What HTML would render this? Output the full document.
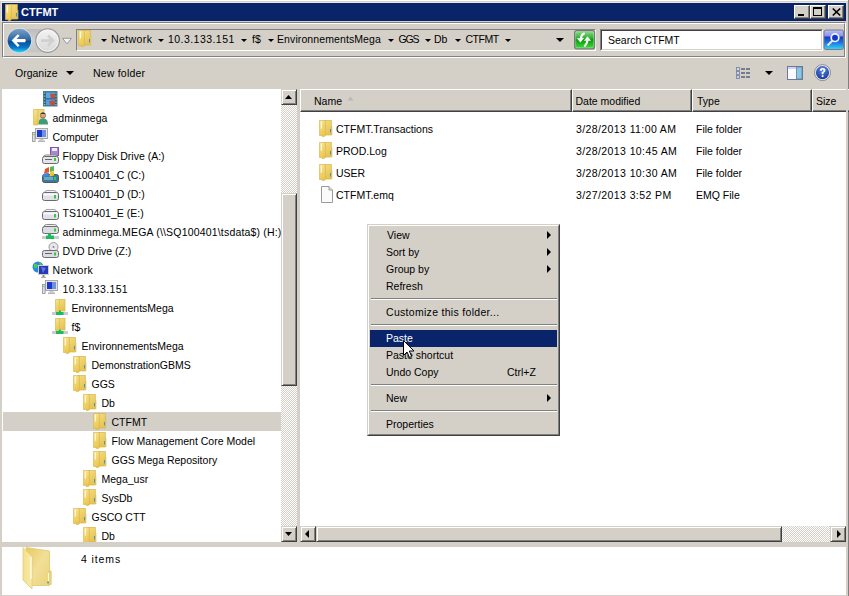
<!DOCTYPE html>
<html><head><meta charset="utf-8">
<style>
*{margin:0;padding:0;box-sizing:border-box}
html,body{width:849px;height:596px;overflow:hidden;background:#d4d0c8;font-family:"Liberation Sans",sans-serif;font-size:10.5px;color:#000}
.a{position:absolute;overflow:visible}
.t{position:absolute;white-space:pre;line-height:12px}
.btn3d{position:absolute;background:#d4d0c8;border-top:1px solid #d4d0c8;border-left:1px solid #d4d0c8;border-right:1px solid #404040;border-bottom:1px solid #404040;box-shadow:inset 1px 1px 0 #fff,inset -1px -1px 0 #808080}
.hdr{position:absolute;background:#d4d0c8;border-top:1px solid #fff;border-left:1px solid #fff;border-right:1px solid #404040;border-bottom:1px solid #404040;box-shadow:inset -1px -1px 0 #808080}
.cap{position:absolute;background:#d4d0c8;border-top:1px solid #fff;border-left:1px solid #fff;border-right:1px solid #404040;border-bottom:1px solid #404040;box-shadow:inset -1px -1px 0 #808080}
.track{position:absolute;background-color:#fff;background-image:repeating-conic-gradient(#d4d0c8 0 25%,#fff 0 50%);background-size:2px 2px}
.tri-d{position:absolute;width:0;height:0;border-left:3px solid transparent;border-right:3px solid transparent;border-top:3px solid #000}
</style></head><body>
<svg width="0" height="0" style="position:absolute">
<defs>
<linearGradient id="gFold" x1="0" x2="0.3" y1="0" y2="1"><stop offset="0" stop-color="#f8e494"/><stop offset="1" stop-color="#ecc850"/></linearGradient>
<linearGradient id="gBack" x1="0" x2="0.4" y1="0" y2="1"><stop offset="0" stop-color="#f4dc80"/><stop offset="1" stop-color="#e6c454"/></linearGradient>
<symbol id="i-folder" viewBox="0 0 17 17">
 <rect x="5.5" y="0.5" width="6.8" height="14.5" fill="url(#gBack)" stroke="#d8b44a" stroke-width="0.7"/>
 <rect x="12.2" y="6" width="1.1" height="9" fill="#e4c050"/>
 <path d="M0.4 0.4 H6.4 V15.4 H5.6 V16.4 H3.2 V15.4 H0.4 Z" fill="url(#gFold)" stroke="#d8b650" stroke-width="0.7"/>
 <rect x="1.8" y="1.5" width="1.2" height="7" fill="#fffae0"/>
 <rect x="11" y="9" width="1" height="3.5" fill="#3a98e0"/>
</symbol>
<symbol id="i-file" viewBox="0 0 17 17">
 <path d="M2.5 0.5 H10 L13.5 4 V16.5 H2.5 Z" fill="#fafafa" stroke="#9a9a9a" stroke-width="1"/>
 <path d="M10 0.5 V4 H13.5" fill="#e6e6e6" stroke="#9a9a9a" stroke-width="1"/>
</symbol>
<symbol id="i-video" viewBox="0 0 17 17">
 <rect x="0.5" y="1.5" width="13.5" height="14.5" fill="#2a5860" stroke="#4a8088"/>
 <rect x="2.8" y="2.3" width="9" height="6" fill="#58a8e8"/>
 <rect x="2.8" y="9.3" width="9" height="6" fill="#4aa0e8"/>
 <path d="M7 4 Q9 3 11.8 4.5 V8.3 H8 Z M6 11.5 Q9 10 11.8 11 V15.3 H7.5Z" fill="#c84a38"/>
 <g fill="#f0f0f0"><rect x="1.2" y="2.6" width="1" height="1"/><rect x="1.2" y="5.6" width="1" height="1"/><rect x="1.2" y="8.6" width="1" height="1"/><rect x="1.2" y="11.6" width="1" height="1"/><rect x="1.2" y="14.2" width="1" height="1"/><rect x="12.4" y="2.6" width="1" height="1"/><rect x="12.4" y="5.6" width="1" height="1"/><rect x="12.4" y="8.6" width="1" height="1"/><rect x="12.4" y="11.6" width="1" height="1"/><rect x="12.4" y="14.2" width="1" height="1"/></g>
</symbol>
<symbol id="i-user" viewBox="0 0 17 17">
 <rect x="3" y="0.5" width="8" height="14" fill="#eed77e" stroke="#d8bc58" stroke-width="0.8"/>
 <path d="M0.5 0.5 H5 V16 H0.5 Z" fill="url(#gFold)" stroke="#dcc062" stroke-width="0.8"/>
 <circle cx="10" cy="6.5" r="2.6" fill="#d9a77a" stroke="#5a4a3a" stroke-width="0.6"/>
 <path d="M5.5 15.5 C5.5 11 7 9.5 10 9.5 C13 9.5 15 11 15 15.5 Z" fill="#3f9a78"/>
 <path d="M7.5 5 C8 3 12 3 12.5 5 Z" fill="#3a3a3a"/>
</symbol>
<symbol id="i-computer" viewBox="0 0 17 17">
 <rect x="3.5" y="0.5" width="12" height="10" fill="#e4e4e4" stroke="#a8a8a8"/>
 <rect x="5" y="2" width="9" height="7" fill="#1a3ad0"/>
 <path d="M10 2 h4 v7 h-4z" fill="#7090e0"/>
 <rect x="7.5" y="11" width="4" height="1.5" fill="#c8c8c8"/>
 <rect x="6" y="12.5" width="7" height="1.5" fill="#b4b4b4"/>
 <rect x="0.5" y="4.5" width="2.6" height="9" fill="#e0e0e0" stroke="#909090" stroke-width="0.8"/>
 <rect x="1.3" y="6" width="1" height="1" fill="#3c3"/>
</symbol>
<symbol id="i-drive" viewBox="0 0 17 17">
 <path d="M2.5 8 Q2.5 5.5 5 5.5 H12 Q14.5 5.5 14.5 8" fill="#f4f4f8" stroke="#9a9aa0" stroke-width="0.9"/>
 <rect x="0.5" y="7.5" width="16" height="8" rx="2" fill="#e0e0e8" stroke="#6a6a70"/>
 <rect x="1.5" y="8.5" width="14" height="2" fill="#f8f8fc"/>
 <rect x="12" y="10" width="2" height="3.5" fill="#3c3"/>
</symbol>
<symbol id="i-floppy" viewBox="0 0 17 17">
 <rect x="8.5" y="0.5" width="8" height="8" fill="#a888d0" stroke="#7a5aa8"/>
 <rect x="10" y="1" width="5" height="3" fill="#f0eaf8"/>
 <path d="M1.5 10 Q1.5 8 4 8 H13 Q15.5 8 15.5 10" fill="#f0f0f0" stroke="#8a8a8a"/>
 <rect x="0.5" y="9.5" width="16" height="7" rx="2" fill="#e4e4ea" stroke="#6a6a70"/>
 <rect x="3" y="12" width="7" height="1" fill="#666"/>
 <rect x="12" y="11" width="2" height="3" fill="#3c3"/>
</symbol>
<symbol id="i-cdrive" viewBox="0 0 17 17">
 <rect x="0.5" y="8.5" width="16" height="8" rx="2" fill="#3a7aa0" stroke="#555"/>
 <rect x="2" y="11" width="9" height="3" fill="#6aa8c8"/>
 <rect x="12" y="11" width="2" height="3" fill="#3c3"/>
 <path d="M3 3 L7 1 L7 6 L2 8z" fill="#e8502a"/>
 <path d="M8 1 L12 0 L12 5 L8 6z" fill="#5cb84a"/>
 <path d="M1 8 L7 6.5 L6.5 10 L0.5 11z" fill="#3a8ae0"/>
 <path d="M8 6.5 L12 5.5 L12 9.5 L7.5 10.5z" fill="#f6c02a"/>
</symbol>
<symbol id="i-netdrive" viewBox="0 0 17 17">
 <path d="M2 4 Q2 1.5 4.5 1.5 H12.5 Q15 1.5 15 4" fill="#f0f0f4" stroke="#8a8a8a"/>
 <rect x="0.5" y="3.5" width="16" height="7" rx="2" fill="#dcdce4" stroke="#6a6a70"/>
 <rect x="12" y="5.5" width="2" height="3" fill="#3c3"/>
 <rect x="0" y="13" width="17" height="3" fill="#c8ccd4"/>
 <rect x="6" y="10.5" width="3" height="3" fill="#1cbc5c"/>
 <rect x="4" y="12.5" width="8" height="3.5" fill="#1cbc5c"/>
</symbol>
<symbol id="i-dvd" viewBox="0 0 17 17">
 <circle cx="11.5" cy="5" r="4.5" fill="#e8e8ec" stroke="#9a9aa0"/>
 <circle cx="11.5" cy="5" r="1" fill="#888"/>
 <rect x="0.5" y="8.5" width="16" height="7" rx="2" fill="#dcdce4" stroke="#6a6a70"/>
 <rect x="3" y="11" width="7" height="1" fill="#666"/>
 <rect x="12" y="10.5" width="2" height="3" fill="#3c3"/>
</symbol>
<symbol id="i-network" viewBox="0 0 17 17">
 <circle cx="6" cy="6" r="5.5" fill="#2a88e0"/>
 <path d="M2 3 Q5 2 6 5 Q4 8 2 7z M7 1 Q10 2 10 4 L8 4z" fill="#4ccc4c"/>
 <rect x="6.5" y="4.5" width="10" height="9" fill="#2838b0" stroke="#d0d0d0"/>
 <path d="M9 6 L14 7 L11 12z" fill="#5a7ae8"/>
 <rect x="10.5" y="14" width="2" height="2" fill="#888"/>
 <rect x="9" y="16" width="5" height="1" fill="#aaa"/>
</symbol>
<symbol id="i-share" viewBox="0 0 17 17">
 <rect x="6" y="0.5" width="7" height="11.5" fill="url(#gBack)" stroke="#d9bc55" stroke-width="0.8"/>
 <path d="M3.5 0.5 H7.5 V12.5 H3.5 Z" fill="url(#gFold)" stroke="#dcc062" stroke-width="0.8"/>
 <rect x="0" y="13" width="16" height="3" fill="#c8ccd4"/>
 <rect x="4" y="13" width="7.5" height="3" fill="#1cbc5c"/>
 <rect x="7" y="11.5" width="2" height="2" fill="#1cbc5c"/>
</symbol>
<linearGradient id="gBackBtn" x1="0" x2="0" y1="0" y2="1"><stop offset="0" stop-color="#7aa2c8"/><stop offset="0.49" stop-color="#2c64a0"/><stop offset="0.51" stop-color="#0a4c94"/><stop offset="0.8" stop-color="#0a78c8"/><stop offset="1" stop-color="#30d4f8"/></linearGradient>
<linearGradient id="gBand" x1="0" x2="0" y1="0" y2="1"><stop offset="0" stop-color="#bcbcbc"/><stop offset="0.5" stop-color="#d0d0d0"/><stop offset="1" stop-color="#c4c4c4"/></linearGradient>
<linearGradient id="gFwdBtn" x1="0" x2="0" y1="0" y2="1"><stop offset="0" stop-color="#f4f4f4"/><stop offset="1" stop-color="#d8d8d8"/></linearGradient>
<linearGradient id="gGreen" x1="0" x2="0" y1="0" y2="1"><stop offset="0" stop-color="#9adc9a"/><stop offset="0.42" stop-color="#2aae2a"/><stop offset="0.5" stop-color="#069a06"/><stop offset="1" stop-color="#48d848"/></linearGradient>
<linearGradient id="gBlue" x1="0" x2="0" y1="0" y2="1"><stop offset="0" stop-color="#b8c0f8"/><stop offset="0.3" stop-color="#8a94ec"/><stop offset="0.36" stop-color="#1838d0"/><stop offset="0.62" stop-color="#1870e0"/><stop offset="1" stop-color="#38d8f8"/></linearGradient>
<linearGradient id="gBigBack" x1="0" x2="1" y1="0" y2="1"><stop offset="0" stop-color="#e6c95e"/><stop offset="0.5" stop-color="#f2df98"/><stop offset="1" stop-color="#ebd277"/></linearGradient>
<linearGradient id="gBigFront" x1="0" x2="1" y1="0" y2="0"><stop offset="0" stop-color="#f4e08c"/><stop offset="1" stop-color="#f8eaaa"/></linearGradient>
<radialGradient id="gHelp" cx="0.5" cy="0.3" r="0.7"><stop offset="0" stop-color="#5a8ae8"/><stop offset="1" stop-color="#1a3a98"/></radialGradient>
</defs></svg>

<!-- window frame -->
<div class="a" style="left:0;top:0;width:848px;height:1px;background:#fff"></div>
<div class="a" style="left:1px;top:2px;width:846px;height:1px;background:#e9e7e2"></div>
<div class="a" style="left:1px;top:2px;width:1px;height:20px;background:#e9e7e2"></div>
<div class="a" style="left:848px;top:0;width:1px;height:596px;background:#808080"></div>

<!-- title bar -->
<div class="a" style="left:2px;top:3px;width:844px;height:18px;background:#0a246a"></div>
<svg class="a" style="left:5px;top:4px" width="17" height="17"><use href="#i-folder"/></svg>
<div class="t" style="left:21px;top:6px;color:#fff;font-weight:bold;font-size:11px">CTFMT</div>
<div class="cap" style="left:794px;top:5px;width:16px;height:14px"><div class="a" style="left:3px;top:8px;width:6px;height:2px;background:#000"></div></div>
<div class="cap" style="left:810px;top:5px;width:16px;height:14px"><div class="a" style="left:2px;top:1px;width:9px;height:9px;border:1px solid #000;border-top-width:2px"></div></div>
<div class="cap" style="left:828px;top:5px;width:16px;height:14px"><svg class="a" style="left:3px;top:2px" width="9" height="8"><path d="M0.8 0.5 L8.2 7.5 M8.2 0.5 L0.8 7.5" stroke="#000" stroke-width="1.7"/></svg></div>

<!-- nav bar etched box -->
<div class="a" style="left:2px;top:22px;width:844px;height:36px;border-top:1px solid #808080;border-left:1px solid #808080;border-right:1px solid #fff;border-bottom:1px solid #fff"></div>
<div class="a" style="left:3px;top:23px;width:842px;height:34px;border-top:1px solid #fff;border-left:1px solid #fff;border-right:1px solid #808080;border-bottom:1px solid #808080"></div>

<!-- back / forward -->
<svg class="a" style="left:4px;top:26px" width="72" height="30">
 <path d="M17 3 H44 Q53 3 53 14.6 Q53 26.2 44 26.2 H17z" fill="url(#gBand)"/>
 <circle cx="43.6" cy="14.6" r="11.8" fill="url(#gFwdBtn)" stroke="#9a9a9a" stroke-width="1.2"/>
 <circle cx="43.6" cy="14.6" r="10.6" fill="none" stroke="#f8f8f8" stroke-width="0.8"/>
 <path d="M37 14.6 H48.5 M44 9.5 L49 14.6 L44 19.7" fill="none" stroke="#d0d0d0" stroke-width="2.6"/>
 <circle cx="15.4" cy="14.6" r="12.6" fill="#e0e4ea"/>
 <circle cx="15.4" cy="14.6" r="11.8" fill="url(#gBackBtn)"/>
 <path d="M7.6 14.6 L13.8 8.2 L15.6 9.8 L12.6 13 H21.2 Q22.4 14.6 21.2 16.2 H12.6 L15.6 19.4 L13.8 21 Z" fill="#fff"/>
 <path d="M58.5 12.3 H67.5 L63 17.8 Z" fill="#f4f4f4" stroke="#8a9098" stroke-width="0.9"/>
</svg>

<!-- address box -->
<div class="a" style="left:76px;top:29px;width:520px;height:22px;border-top:1px solid #808080;border-left:1px solid #808080;border-right:1px solid #fff;border-bottom:1px solid #fff"></div>
<svg class="a" style="left:78px;top:30px" width="17" height="17"><use href="#i-folder"/></svg>
<div class="t" style="left:111px;top:33px;letter-spacing:0.4px">Network</div>
<div class="t" style="left:168px;top:33px;letter-spacing:0.45px">10.3.133.151</div>
<div class="t" style="left:252px;top:33px">f$</div>
<div class="t" style="left:277px;top:33px;letter-spacing:0.1px">EnvironnementsMega</div>
<div class="t" style="left:398.5px;top:33px;letter-spacing:-1.2px">GGS</div>
<div class="t" style="left:434px;top:33px">Db</div>
<div class="t" style="left:465.5px;top:33px;letter-spacing:-0.5px">CTFMT</div>
<div class="tri-d" style="left:101px;top:39px"></div>
<div class="tri-d" style="left:158px;top:39px"></div>
<div class="tri-d" style="left:241px;top:39px"></div>
<div class="tri-d" style="left:268px;top:39px"></div>
<div class="tri-d" style="left:388px;top:39px"></div>
<div class="tri-d" style="left:425px;top:39px"></div>
<div class="tri-d" style="left:455px;top:39px"></div>
<div class="tri-d" style="left:505px;top:39px"></div>
<div class="tri-d" style="left:556px;top:38px;border-left-width:4px;border-right-width:4px;border-top-width:4px"></div>

<!-- refresh -->
<svg class="a" style="left:574px;top:30px" width="22" height="20">
 <rect x="0.6" y="0.6" width="20" height="18.2" rx="2" fill="url(#gGreen)" stroke="#7a7a7a" stroke-width="1.2"/>
 <rect x="1.7" y="1.7" width="17.8" height="16" rx="1.5" fill="none" stroke="#b8f0b8" stroke-width="0.6" opacity="0.7"/>
 <path d="M10 3.6 Q7.2 4.6 7 8.5" fill="none" stroke="#f4f4f4" stroke-width="2.2" stroke-linecap="round"/>
 <path d="M2.8 8.2 L10.2 8 L6.3 12.6 Z" fill="#f4f4f4"/>
 <path d="M9.8 10.8 L17.2 10.8 L13.5 6.3 Z" fill="#f4f4f4"/>
 <path d="M13.4 10.5 Q13 14 10.8 15.8" fill="none" stroke="#f4f4f4" stroke-width="2.2" stroke-linecap="round"/>
</svg>

<!-- search box -->
<div class="a" style="left:600px;top:29px;width:223px;height:22px;background:#fff;border-top:1px solid #808080;border-left:1px solid #808080;border-right:1px solid #fff;border-bottom:1px solid #fff"><div class="a" style="left:0;top:0;width:221px;height:20px;border-top:1px solid #404040;border-left:1px solid #404040;border-right:1px solid #d4d0c8;border-bottom:1px solid #d4d0c8"></div></div>
<div class="t" style="left:608px;top:34px">Search CTFMT</div>
<svg class="a" style="left:823px;top:29px" width="22" height="22">
 <rect x="1" y="1" width="19.5" height="19.5" rx="2" fill="url(#gBlue)" stroke="#7a7a80" stroke-width="1"/>
 <circle cx="12" cy="8.7" r="3.8" fill="#1238c8" stroke="#f4f4f8" stroke-width="1.7"/>
 <path d="M9.5 11.5 L4.5 16.5" stroke="#e8e8e8" stroke-width="2.2"/>
</svg>

<!-- toolbar -->
<div class="t" style="left:15px;top:67px">Organize</div>
<div class="tri-d" style="left:66px;top:71px;border-left-width:4px;border-right-width:4px;border-top-width:4px"></div>
<div class="t" style="left:93px;top:67px;letter-spacing:0.2px">New folder</div>
<svg class="a" style="left:735px;top:66px" width="18" height="15">
 <g fill="#fafafc" stroke="#7888a8" stroke-width="0.9"><rect x="1.5" y="1.5" width="3" height="3"/><rect x="1.5" y="5.5" width="3" height="3"/><rect x="1.5" y="9.5" width="3" height="3"/></g>
 <rect x="2.5" y="2.5" width="1" height="1" fill="#3a3"/><rect x="2.5" y="6.5" width="1" height="1" fill="#d33"/><rect x="2.5" y="10.5" width="1" height="1" fill="#33d"/>
 <g fill="#4a5a74"><rect x="6" y="2.3" width="4" height="1.4"/><rect x="11" y="2.3" width="4" height="1.4"/><rect x="6" y="6.3" width="4" height="1.4"/><rect x="11" y="6.3" width="4" height="1.4"/><rect x="6" y="10.3" width="4" height="1.4"/><rect x="11" y="10.3" width="4" height="1.4"/></g>
</svg>
<div class="tri-d" style="left:765px;top:71px;border-left-width:4px;border-right-width:4px;border-top-width:4px"></div>
<svg class="a" style="left:786px;top:65px" width="18" height="16">
 <rect x="1.5" y="1.5" width="15" height="13" fill="#fafaff" stroke="#6a7a98"/>
 <rect x="10.5" y="2" width="5.5" height="12" fill="#8ac8e8" stroke="#6a7a98" stroke-width="0.8"/>
 <rect x="2" y="2" width="8" height="2" fill="#c8d8f0"/>
</svg>
<svg class="a" style="left:813px;top:63px" width="20" height="20">
 <circle cx="9.5" cy="9.6" r="8" fill="#e8e8ee" stroke="#8a8a96" stroke-width="1"/>
 <circle cx="9.5" cy="9.6" r="6.6" fill="url(#gHelp)"/>
 <path d="M6.8 7.6 Q6.8 4.9 9.6 4.9 Q12.5 4.9 12.5 7.3 Q12.5 8.9 10.5 9.8 V11.2 H8.7 V9.1 Q10.6 8.4 10.6 7.4 Q10.6 6.6 9.6 6.6 Q8.7 6.6 8.7 7.9z" fill="#fff"/>
 <rect x="8.7" y="12.2" width="1.8" height="1.8" fill="#fff"/>
</svg>

<!-- tree pane -->
<div class="a" style="left:2px;top:89px;width:279px;height:453px;background:#fff;overflow:hidden"></div>
<div class="a" style="left:0;top:0;width:281px;height:542px;overflow:hidden">
<svg class="a" style="left:43px;top:90px" width="17" height="17"><use href="#i-video"/></svg>
<div class="t" style="left:62.5px;top:93px;letter-spacing:0px">Videos</div>
<svg class="a" style="left:33px;top:109px" width="17" height="17"><use href="#i-user"/></svg>
<div class="t" style="left:52.5px;top:112px;letter-spacing:0px">adminmega</div>
<svg class="a" style="left:32px;top:128px" width="17" height="17"><use href="#i-computer"/></svg>
<div class="t" style="left:52.5px;top:131px;letter-spacing:0px">Computer</div>
<svg class="a" style="left:42px;top:147px" width="17" height="17"><use href="#i-floppy"/></svg>
<div class="t" style="left:62.5px;top:150px;letter-spacing:0px">Floppy Disk Drive (A:)</div>
<svg class="a" style="left:42px;top:166px" width="17" height="17"><use href="#i-cdrive"/></svg>
<div class="t" style="left:62.5px;top:169px;letter-spacing:0px">TS100401_C (C:)</div>
<svg class="a" style="left:42px;top:185px" width="17" height="17"><use href="#i-drive"/></svg>
<div class="t" style="left:62.5px;top:188px;letter-spacing:0px">TS100401_D (D:)</div>
<svg class="a" style="left:42px;top:204px" width="17" height="17"><use href="#i-drive"/></svg>
<div class="t" style="left:62.5px;top:207px;letter-spacing:0px">TS100401_E (E:)</div>
<svg class="a" style="left:42px;top:223px" width="17" height="17"><use href="#i-netdrive"/></svg>
<div class="t" style="left:62.5px;top:226px;letter-spacing:0.18px">adminmega.MEGA (\\SQ100401\tsdata$) (H:)</div>
<svg class="a" style="left:42px;top:242px" width="17" height="17"><use href="#i-dvd"/></svg>
<div class="t" style="left:62.5px;top:245px;letter-spacing:0px">DVD Drive (Z:)</div>
<svg class="a" style="left:32px;top:261px" width="17" height="17"><use href="#i-network"/></svg>
<div class="t" style="left:52.5px;top:264px;letter-spacing:0.3px">Network</div>
<svg class="a" style="left:42px;top:280px" width="17" height="17"><use href="#i-computer"/></svg>
<div class="t" style="left:62.5px;top:283px;letter-spacing:0.35px">10.3.133.151</div>
<svg class="a" style="left:52px;top:299px" width="17" height="17"><use href="#i-share"/></svg>
<div class="t" style="left:71.5px;top:302px;letter-spacing:0px">EnvironnementsMega</div>
<svg class="a" style="left:52px;top:318px" width="17" height="17"><use href="#i-share"/></svg>
<div class="t" style="left:71.5px;top:321px;letter-spacing:0px">f$</div>
<svg class="a" style="left:63px;top:337px" width="17" height="17"><use href="#i-folder"/></svg>
<div class="t" style="left:81.5px;top:340px;letter-spacing:0px">EnvironnementsMega</div>
<svg class="a" style="left:73px;top:356px" width="17" height="17"><use href="#i-folder"/></svg>
<div class="t" style="left:91.5px;top:359px;letter-spacing:0px">DemonstrationGBMS</div>
<svg class="a" style="left:73px;top:375px" width="17" height="17"><use href="#i-folder"/></svg>
<div class="t" style="left:91.5px;top:378px;letter-spacing:0px">GGS</div>
<svg class="a" style="left:83px;top:394px" width="17" height="17"><use href="#i-folder"/></svg>
<div class="t" style="left:101.5px;top:397px;letter-spacing:0px">Db</div>
<div class="a" style="left:3px;top:412px;width:278px;height:19px;background:#d4d0c8"></div>
<svg class="a" style="left:93px;top:413px" width="17" height="17"><use href="#i-folder"/></svg>
<div class="t" style="left:111.5px;top:416px;letter-spacing:0px">CTFMT</div>
<svg class="a" style="left:93px;top:432px" width="17" height="17"><use href="#i-folder"/></svg>
<div class="t" style="left:111.5px;top:435px;letter-spacing:0px">Flow Management Core Model</div>
<svg class="a" style="left:93px;top:451px" width="17" height="17"><use href="#i-folder"/></svg>
<div class="t" style="left:111.5px;top:454px;letter-spacing:0px">GGS Mega Repository</div>
<svg class="a" style="left:83px;top:470px" width="17" height="17"><use href="#i-folder"/></svg>
<div class="t" style="left:101.5px;top:473px;letter-spacing:0px">Mega_usr</div>
<svg class="a" style="left:83px;top:489px" width="17" height="17"><use href="#i-folder"/></svg>
<div class="t" style="left:101.5px;top:492px;letter-spacing:0px">SysDb</div>
<svg class="a" style="left:73px;top:508px" width="17" height="17"><use href="#i-folder"/></svg>
<div class="t" style="left:91.5px;top:511px;letter-spacing:0px">GSCO CTT</div>
<svg class="a" style="left:83px;top:527px" width="17" height="17"><use href="#i-folder"/></svg>
<div class="t" style="left:101.5px;top:530px;letter-spacing:0px">Db</div>
</div>

<!-- tree scrollbar -->
<div class="track" style="left:281px;top:89px;width:16px;height:453px"></div>
<div class="btn3d" style="left:281px;top:89px;width:16px;height:16px"><svg class="a" style="left:3px;top:5px" width="8" height="5"><path d="M0 4 L3.5 0 L7 4z" fill="#000"/></svg></div>
<div class="btn3d" style="left:281px;top:193px;width:16px;height:193px"></div>
<div class="btn3d" style="left:281px;top:526px;width:16px;height:16px"><svg class="a" style="left:3px;top:5px" width="8" height="5"><path d="M0 0 L3.5 4 L7 0z" fill="#000"/></svg></div>

<!-- right pane -->
<div class="a" style="left:300px;top:89px;width:546px;height:453px;background:#fff"></div>
<div class="hdr" style="left:300px;top:89px;width:272px;height:23px"></div>
<div class="hdr" style="left:572px;top:89px;width:120px;height:23px"></div>
<div class="hdr" style="left:692px;top:89px;width:120px;height:23px"></div>
<div class="hdr" style="left:812px;top:89px;width:40px;height:23px"></div>
<div class="a" style="left:846px;top:89px;width:2px;height:453px;background:#d4d0c8"></div>
<div class="t" style="left:314px;top:95px">Name</div>
<svg class="a" style="left:347px;top:96px" width="8" height="5"><path d="M0.5 4.5 L3.5 0.5 L6.5 4.5z" fill="#b8b8b8"/></svg>
<div class="t" style="left:575.5px;top:95px">Date modified</div>
<div class="t" style="left:697px;top:95px">Type</div>
<div class="t" style="left:816px;top:95px">Size</div>
<svg class="a" style="left:319px;top:120px" width="17" height="17"><use href="#i-folder"/></svg>
<div class="t" style="left:336px;top:123px">CTFMT.Transactions</div>
<div class="t" style="left:576px;top:123px;letter-spacing:0.4px">3/28/2013 11:00 AM</div>
<div class="t" style="left:696px;top:123px">File folder</div>
<svg class="a" style="left:319px;top:142px" width="17" height="17"><use href="#i-folder"/></svg>
<div class="t" style="left:336px;top:145px">PROD.Log</div>
<div class="t" style="left:576px;top:145px;letter-spacing:0.4px">3/28/2013 10:45 AM</div>
<div class="t" style="left:696px;top:145px">File folder</div>
<svg class="a" style="left:319px;top:164px" width="17" height="17"><use href="#i-folder"/></svg>
<div class="t" style="left:336px;top:167px">USER</div>
<div class="t" style="left:576px;top:167px;letter-spacing:0.4px">3/28/2013 10:30 AM</div>
<div class="t" style="left:696px;top:167px">File folder</div>
<svg class="a" style="left:319px;top:186px" width="17" height="17"><use href="#i-file"/></svg>
<div class="t" style="left:336px;top:189px">CTFMT.emq</div>
<div class="t" style="left:576px;top:189px;letter-spacing:0.4px">3/27/2013 3:52 PM</div>
<div class="t" style="left:696px;top:189px">EMQ File</div>

<!-- h scrollbar -->
<div class="track" style="left:300px;top:526px;width:546px;height:16px"></div>
<div class="btn3d" style="left:300px;top:526px;width:16px;height:16px"><div class="a" style="left:4px;top:3px;width:0;height:0;border-top:4px solid transparent;border-bottom:4px solid transparent;border-right:4px solid #000"></div></div>
<div class="btn3d" style="left:316px;top:526px;width:466px;height:16px"></div>
<div class="btn3d" style="left:830px;top:526px;width:16px;height:16px"><div class="a" style="left:6px;top:3px;width:0;height:0;border-top:4px solid transparent;border-bottom:4px solid transparent;border-left:4px solid #000"></div></div>

<!-- status bar -->
<div class="a" style="left:2px;top:547px;width:844px;height:48px;background:#fff"></div>
<svg class="a" style="left:22px;top:547px" width="32" height="44">
 <path d="M4 0.5 L27.5 4 V38.5 H8 Z" fill="url(#gBigBack)" stroke="#e2c86a" stroke-width="0.8"/>
 <rect x="27" y="24" width="2.2" height="13.5" fill="#ecd684" stroke="#dcc060" stroke-width="0.6"/>
 <rect x="26" y="26" width="1" height="8" fill="#fffbe8"/>
 <circle cx="26" cy="35.5" r="0.9" fill="#3a90e0"/>
 <path d="M1 0.5 L10 9.5 V42 L1 33 Z" fill="url(#gBigFront)" stroke="#e4cc76" stroke-width="0.8"/>
 <path d="M9 10 V32" stroke="#fffdf0" stroke-width="1.2"/>
</svg>
<div class="t" style="left:81px;top:553px;letter-spacing:0.9px">4 items</div>

<!-- context menu -->
<div class="a" style="left:367px;top:224px;width:193px;height:212px;background:#d4d0c8;border-top:1px solid #d4d0c8;border-left:1px solid #d4d0c8;border-right:1px solid #404040;border-bottom:1px solid #404040"></div>
<div class="a" style="left:368px;top:225px;width:191px;height:210px;border-top:1px solid #fff;border-left:1px solid #fff;border-right:1px solid #808080;border-bottom:1px solid #808080"></div>
<div class="t" style="left:387px;top:229px;color:#000;letter-spacing:0px">View</div>
<div class="a" style="left:547px;top:231px;width:0;height:0;border-top:4px solid transparent;border-bottom:4px solid transparent;border-left:4px solid #000"></div>
<div class="t" style="left:386px;top:246px;color:#000;letter-spacing:0px">Sort by</div>
<div class="a" style="left:547px;top:248px;width:0;height:0;border-top:4px solid transparent;border-bottom:4px solid transparent;border-left:4px solid #000"></div>
<div class="t" style="left:386px;top:263px;color:#000;letter-spacing:0px">Group by</div>
<div class="a" style="left:547px;top:265px;width:0;height:0;border-top:4px solid transparent;border-bottom:4px solid transparent;border-left:4px solid #000"></div>
<div class="t" style="left:386px;top:280px;color:#000;letter-spacing:0px">Refresh</div>
<div class="a" style="left:371px;top:298px;width:186px;height:1px;background:#808080"></div>
<div class="a" style="left:371px;top:299px;width:186px;height:1px;background:#fff"></div>
<div class="t" style="left:386px;top:306px;color:#000;letter-spacing:0.3px">Customize this folder...</div>
<div class="a" style="left:371px;top:324px;width:186px;height:1px;background:#808080"></div>
<div class="a" style="left:371px;top:325px;width:186px;height:1px;background:#fff"></div>
<div class="a" style="left:370px;top:330px;width:187px;height:17px;background:#0a246a"></div>
<div class="t" style="left:386px;top:332px;color:#fff;letter-spacing:0px">Paste</div>
<div class="t" style="left:386px;top:349px;color:#000;letter-spacing:0px">Paste shortcut</div>
<div class="t" style="left:386px;top:366px;color:#000;letter-spacing:0px">Undo Copy</div>
<div class="t" style="left:507px;top:366px;color:#000">Ctrl+Z</div>
<div class="a" style="left:371px;top:384px;width:186px;height:1px;background:#808080"></div>
<div class="a" style="left:371px;top:385px;width:186px;height:1px;background:#fff"></div>
<div class="t" style="left:386px;top:392px;color:#000;letter-spacing:0px">New</div>
<div class="a" style="left:547px;top:394px;width:0;height:0;border-top:4px solid transparent;border-bottom:4px solid transparent;border-left:4px solid #000"></div>
<div class="a" style="left:371px;top:410px;width:186px;height:1px;background:#808080"></div>
<div class="a" style="left:371px;top:411px;width:186px;height:1px;background:#fff"></div>
<div class="t" style="left:386px;top:418px;color:#000;letter-spacing:0px">Properties</div>

<!-- cursor -->
<svg class="a" style="left:403px;top:340px" width="13" height="20">
 <path d="M0.5 0.5 V15.5 L4 12 L6.5 17.5 L8.7 16.5 L6.3 11 H11 Z" fill="#fff" stroke="#000" stroke-width="1"/>
</svg>

</body></html>
